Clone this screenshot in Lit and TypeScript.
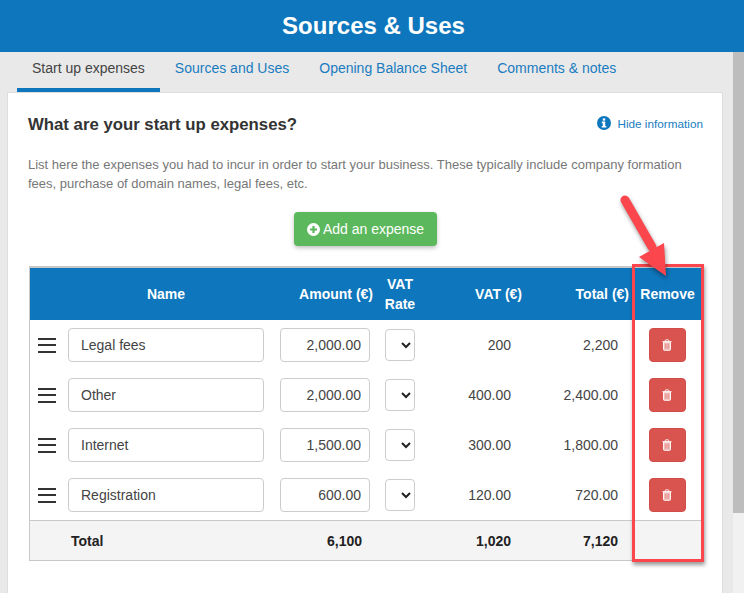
import { LitElement, html, css, svg } from "lit";
import { customElement } from "lit/decorators.js";

const rows = [
  ["Legal fees", "2,000.00", "200", "2,200"],
  ["Other", "2,000.00", "400.00", "2,400.00"],
  ["Internet", "1,500.00", "300.00", "1,800.00"],
  ["Registration", "600.00", "120.00", "720.00"],
];

const trash = svg`<svg class="trash" viewBox="0 0 12 14" width="10" height="12">
  <path d="M0.5 3h11M4 3V1.4Q4 .8 4.6 .8h2.8Q8 .8 8 1.4V3" fill="none" stroke="#fff" stroke-width="1.1"/>
  <path d="M1.8 3.5h8.4v8.9q0 1-1 1H2.8q-1 0-1-1z" fill="#f0bdbb" stroke="#fff" stroke-width="1.1"/>
  <path d="M4.3 5.5v6M6 5.5v6M7.7 5.5v6" stroke="#e58a87" stroke-width=".8"/>
</svg>`;

@customElement("app-root")
export class AppRoot extends LitElement {
  static styles = css`
    :host { display: block; position: relative; width: 744px; height: 593px; overflow: hidden;
      font-family: "Liberation Sans", Arial, sans-serif; color: #333; background: #e9e9e9; }
    * { box-sizing: border-box; }
    header { height: 52px; background: #0e76bc; color: #fff; font-size: 24px; font-weight: 700;
      display: flex; align-items: center; justify-content: center; padding: 0 0 1px 3px; }
    .body { display: flex; height: 541px; }
    main { width: 733px; padding: 0 10px 0 7px; }
    .scroll { width: 11px; background: #f1f1f1; }
    .thumb { height: 461px; background: #bdbdbd; }
    nav { display: flex; height: 40px; padding-left: 10px; font-size: 14px; color: #1a7cc0; }
    nav span { padding: 0 15px; line-height: 33px; height: 40px; }
    nav .active { color: #444; border-bottom: 4px solid #0e76bc; }
    .card { background: #fff; border: 1px solid #ddd; border-bottom: 0; height: 501px; padding: 0 19px 0 20px; }
    .top { display: flex; justify-content: space-between; align-items: center; height: 61px; }
    h2 { margin: 2px 0 0; font-size: 16.75px; font-weight: 700; color: #333; }
    .hide { display: flex; align-items: center; gap: 6px; font-size: 11.75px; color: #1a7cc0; margin-top: -1px; }
    p { margin: 0; padding-top: 1px; font-size: 13px; line-height: 19px; color: #777; width: 680px; }
    .add-row { display: flex; justify-content: center; margin-top: 19px; }
    .add { display: flex; align-items: center; gap: 3px; width: 143px; height: 34px; justify-content: center;
      background: #5cb85c; color: #fff; font-size: 14px; border-radius: 4px; box-shadow: 0 2px 4px rgba(0,0,0,.25); }
    .table { margin-top: 20px; width: 675px; margin-left: 1px; border: 1px solid #c8c8c8; border-top: 2px solid #c8c8c8; }
    .r { display: grid; grid-template-columns: 38px 204px 106px 44px 100px 107px 74px; align-items: center; }
    .head { height: 52px; background: #0e76bc; color: #fff; font-size: 14px; font-weight: 700; text-align: right; }
    .head .n { text-align: center; padding-right: 8px; }
    .head .am { padding-right: 5px; }
    .head .vr { text-align: center; line-height: 20px; }
    .head .rm { text-align: center; padding-left: 3px; }
    .row { height: 50px; font-size: 14px; text-align: right; }
    .burger { display: flex; flex-direction: column; gap: 4.5px; margin-left: 8px; width: 18px; }
    .burger i { display: block; height: 2px; background: #333; }
    input { font: inherit; color: #444; height: 34px; border: 1px solid #ccc; border-radius: 4px; padding: 0 8px; background: #fff; outline: none; }
    .name { display: block; width: 196px; padding: 0 12px; text-align: left; }
    .amt { width: 90px; margin-left: 8px; text-align: right; display: block; }
    select { display: block; width: 30px; height: 32px; margin: 0 auto; border: 1px solid #ccc; border-radius: 4px; background: #fff; color: #222; outline: none; }
    .v { padding-right: 11px; color: #444; }
    .del { width: 37px; height: 34px; background: #d9534f; border: 1px solid #d24d49; border-radius: 4px; margin: 0 auto; position: relative; left: 1px;
      display: flex; align-items: center; justify-content: center; }
    .total { height: 40px; background: #f4f4f4; border-top: 1px solid #c8c8c8; font-size: 14px; font-weight: 700; text-align: right; color: #222; }
    .total .lab { text-align: left; padding-left: 3px; }
    .total .a6 { padding-right: 16px; }
    .total .v { color: #222; }
    .box { position: absolute; left: 632px; top: 264px; width: 72px; height: 298px; border: 3px solid #fa464c; box-shadow: 1px 3px 4px rgba(0,0,0,.4); }
    .arrow { position: absolute; left: 610px; top: 185px; filter: drop-shadow(1px 3px 2px rgba(0,0,0,.4)); }
  `;

  render() {
    return html`
      <header>Sources &amp; Uses</header>
      <div class="body">
        <main>
          <nav>
            <span class="active">Start up expenses</span>
            <span>Sources and Uses</span>
            <span>Opening Balance Sheet</span>
            <span>Comments &amp; notes</span>
          </nav>
          <section class="card">
            <div class="top">
              <h2>What are your start up expenses?</h2>
              <div class="hide">
                <svg viewBox="0 0 14 14" width="14" height="14">
                  <circle cx="7" cy="7" r="7" fill="#0e76bc"/>
                  <rect x="5.8" y="2.4" width="2.4" height="2.2" fill="#fff"/>
                  <path d="M4.8 5.6h3.4v4.4h1.1v1.6H4.8V10h1V7.2h-1z" fill="#fff"/>
                </svg>
                Hide information
              </div>
            </div>
            <p>List here the expenses you had to incur in order to start your business. These typically include company formation fees, purchase of domain names, legal fees, etc.</p>
            <div class="add-row">
              <div class="add">
                <svg viewBox="0 0 13 13" width="13" height="13">
                  <circle cx="6.5" cy="6.5" r="6.5" fill="#fff"/>
                  <path d="M3 5.4h2.4V3h2.2v2.4H10v2.2H7.6V10H5.4V7.6H3z" fill="#5cb85c"/>
                </svg>
                Add an expense
              </div>
            </div>
            <div class="table">
              <div class="r head">
                <span></span><span class="n">Name</span><span class="am">Amount (€)</span>
                <span class="vr">VAT<br />Rate</span><span>VAT (€)</span><span>Total (€)</span><span class="rm">Remove</span>
              </div>
              ${rows.map(
                (r) => html`<div class="r row">
                  <div class="burger"><i></i><i></i><i></i></div>
                  <div><input class="name" .value=${r[0]} /></div>
                  <div><input class="amt" .value=${r[1]} /></div>
                  <div><select></select></div>
                  <div class="v">${r[2]}</div>
                  <div class="v">${r[3]}</div>
                  <div><div class="del">${trash}</div></div>
                </div>`
              )}
              <div class="r total">
                <span></span><span class="lab">Total</span><span class="a6">6,100</span><span></span>
                <span class="v">1,020</span><span class="v">7,120</span><span></span>
              </div>
            </div>
          </section>
        </main>
        <div class="scroll"><div class="thumb"></div></div>
      </div>
      <div class="box"></div>
      <svg class="arrow" width="70" height="100" viewBox="0 0 70 100">
        <path d="M15 15L42 62" stroke="#fa464c" stroke-width="9" stroke-linecap="round" fill="none"/>
        <path d="M56 91L29 72L54 58z" fill="#fa464c"/>
      </svg>
    `;
  }
}
